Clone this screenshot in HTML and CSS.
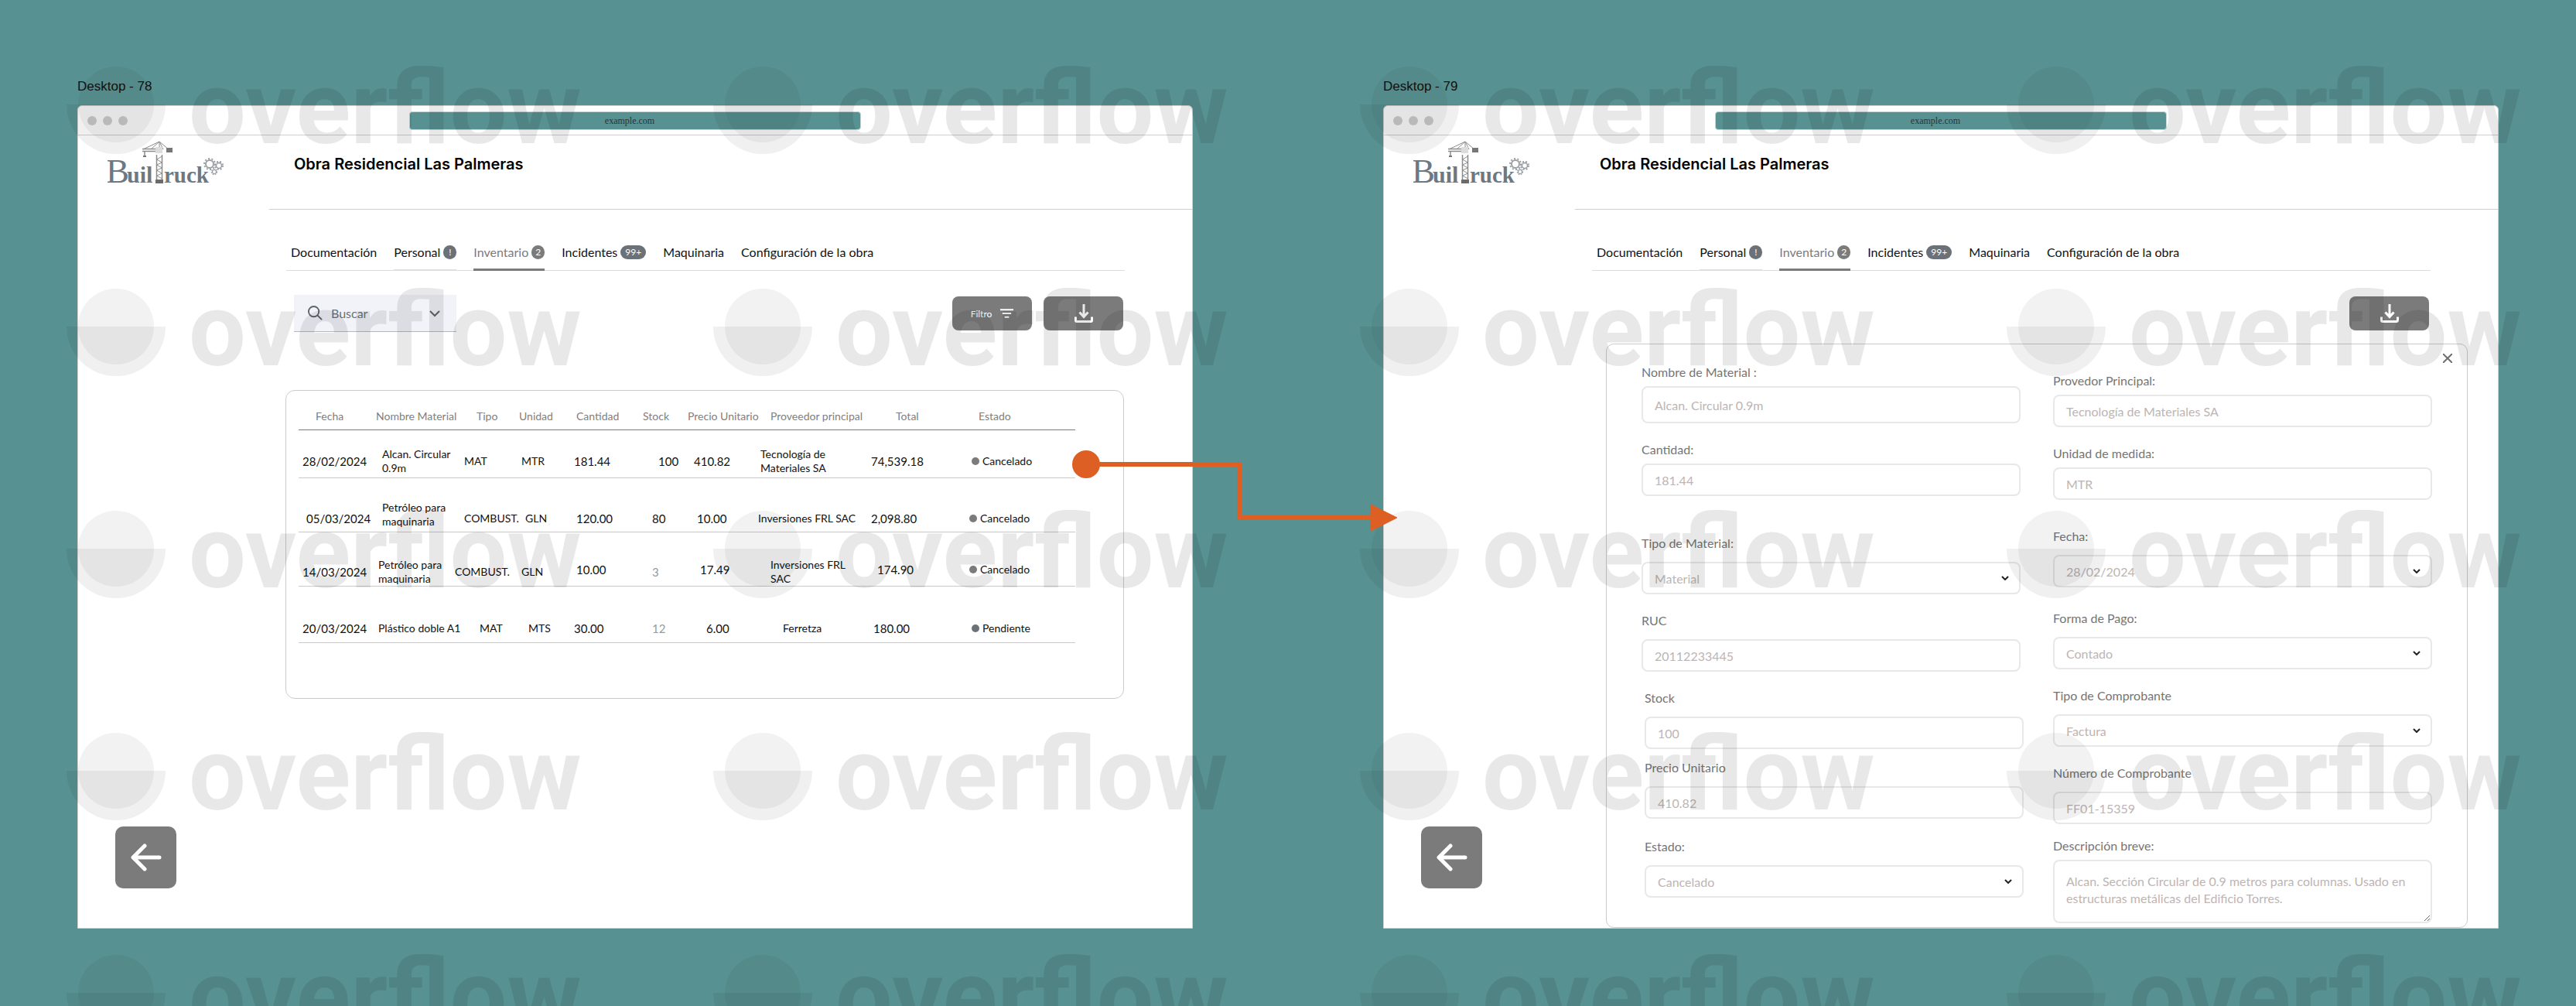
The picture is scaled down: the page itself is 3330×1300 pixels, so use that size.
FILE: index.html
```html
<!DOCTYPE html>
<html lang="es">
<head>
<meta charset="utf-8">
<meta name="viewport" content="width=device-width, initial-scale=1">
<title>Obra Residencial Las Palmeras</title>
<link rel="stylesheet" href="styles.css">
</head>
<body>
<svg class="defs" aria-hidden="true">
  <defs>
    <symbol id="logo" viewBox="0 0 150 56">
      <g class="logo-letters">
        <text x="-2" y="54" font-size="45">B</text>
        <text x="25" y="54" font-size="30" font-weight="700">uil</text>
        <text x="73" y="54" font-size="29" font-weight="700">ruck</text>
      </g>
      <g fill="none" stroke="#8c8c8c">
        <path d="M63.500 18V53M70.500 18V53" stroke-width="1.500"/>
        <path d="M63.500 24l7-4M63.500 24l7 4M63.500 31l7-3M63.500 31l7 4M63.500 38l7-3M63.500 38l7 4M63.500 45l7-3M63.500 45l7 4" stroke-width="1"/>
        <path d="M67 1L46 11M67 1L56 11M67 1V12M67 1l12 10M67 1l5 10" stroke-width="1"/>
        <path d="M45 10.500H62M45 13.500H62" stroke-width="1.500"/>
        <path d="M48 14v6" stroke-width="1.500"/>
      </g>
      <path d="M62 8h9v8h-9z" fill="#dcdcdc"/>
      <path d="M76 9h8v6h-8zM46 19h4v2h-4z" fill="#777"/>
      <path d="M62 50h10v5H62z" fill="#6b6b6b"/>
      <g fill="none" stroke="#9aa0a3">
        <circle cx="132" cy="30" r="5" stroke-width="2"/>
        <circle cx="132" cy="30" r="7" stroke-width="2" stroke-dasharray="2 2.400"/>
        <circle cx="144" cy="32" r="3.500" stroke-width="1.500"/>
        <circle cx="144" cy="32" r="5" stroke-width="2" stroke-dasharray="2 2"/>
        <circle cx="138" cy="40" r="2.500" stroke-width="1.200"/>
        <circle cx="138" cy="40" r="3.500" stroke-width="1.500" stroke-dasharray="1.500 1.500"/>
      </g>
    </symbol>
    <symbol id="i-download" viewBox="0 0 24 24">
      <path d="M12 0v16M6.500 10.500L12 16.500l5.500-6M1.500 16.500v4.500q0 1.500 1.500 1.500h18q1.500 0 1.500-1.500v-4.500" fill="none" stroke="currentColor" stroke-width="3"/>
    </symbol>
    <symbol id="i-back" viewBox="0 0 40 36">
      <path d="M37 18H4M18 3L3 18l15 15" fill="none" stroke="currentColor" stroke-width="5" stroke-linecap="round" stroke-linejoin="round"/>
    </symbol>
    <symbol id="i-down" viewBox="0 0 10 6">
      <path d="M1 1l4 4 4-4" fill="none" stroke="currentColor" stroke-width="2"/>
    </symbol>
  </defs>
</svg>

<main class="stage">
  <section class="frame">
    <h2 class="frame-label">Desktop - 78</h2>
    <div class="window">
      <div class="titlebar">
        <div class="dots"><span class="dot"></span><span class="dot"></span><span class="dot"></span></div>
        <div class="address">example.com</div>
      </div>
      <div class="app">
        <aside class="sidebar">
          <svg class="logo" role="img" aria-label="BuilTruck"><use href="#logo"/></svg>
          <button class="btn back" type="button" aria-label="Volver"><svg class="back-icon"><use href="#i-back"/></svg></button>
        </aside>
        <div class="content">
          <header class="header"><h1 class="title">Obra Residencial Las Palmeras</h1></header>
          <nav class="tabs">
            <a class="tab" href="#doc">Documentación</a>
            <a class="tab tab-alert" href="#per">Personal <span class="badge">!</span></a>
            <a class="tab tab-active" href="#inv">Inventario <span class="badge">2</span></a>
            <a class="tab" href="#inc">Incidentes <span class="badge badge-wide">99+</span></a>
            <a class="tab" href="#maq">Maquinaria</a>
            <a class="tab" href="#conf">Configuración de la obra</a>
          </nav>
          <div class="toolbar">
            <label class="search">
              <svg class="search-icon" viewBox="0 0 20 20" aria-hidden="true"><circle cx="8" cy="8" r="7" fill="none" stroke="currentColor" stroke-width="2"/><path d="M13 13l6 6" stroke="currentColor" stroke-width="2"/></svg>
              <input class="search-input" type="text" placeholder="Buscar" aria-label="Buscar">
              <svg class="search-chevron" viewBox="0 0 14 10" aria-hidden="true"><path d="M1 2l6 6 6-6" fill="none" stroke="currentColor" stroke-width="2"/></svg>
            </label>
            <div class="actions">
              <button class="btn action" type="button">Filtro
                <svg class="filter-icon" viewBox="0 0 18 12" aria-hidden="true"><path d="M0 1h18M3 6h12M6 11h6" stroke="currentColor" stroke-width="2"/></svg>
              </button>
              <button class="btn action" type="button" aria-label="Descargar"><svg class="download-icon"><use href="#i-download"/></svg></button>
            </div>
          </div>
          <div class="card">
            <table class="inventory">
              <colgroup><col class="c-date"><col class="c-name"><col class="c-type"><col class="c-unit"><col class="c-qty"><col class="c-stock"><col class="c-price"><col class="c-vendor"><col class="c-total"><col class="c-state"></colgroup>
              <thead>
                <tr><th class="in-5">Fecha</th><th>Nombre Material</th><th class="in-7">Tipo</th><th>Unidad</th><th class="in-1">Cantidad</th><th>Stock</th><th>Precio Unitario</th><th class="in-4">Proveedor principal</th><th class="in-8">Total</th><th class="in-3">Estado</th></tr>
              </thead>
              <tbody>
                <tr class="row-a"><td class="num in-1">28/02/2024</td><td class="in-2">Alcan. Circular<br>0.9m</td><td class="in-3">MAT</td><td class="in-1">MTR</td><td class="num">181.44</td><td class="num in-5">100</td><td class="num in-2">410.82</td><td class="in-1">Tecnología de<br>Materiales SA</td><td class="num">74,539.18</td><td class="in-1"><span class="state">Cancelado</span></td></tr>
                <tr class="row-b"><td class="num low in-2">05/03/2024</td><td class="in-2">Petróleo para<br>maquinaria</td><td class="low in-3">COMBUST.</td><td class="low in-2">GLN</td><td class="num low in-1">120.00</td><td class="num low in-3">80</td><td class="num low in-3">10.00</td><td class="low">Inversiones FRL SAC</td><td class="num low">2,098.80</td><td class="low"><span class="state">Cancelado</span></td></tr>
                <tr class="row-c"><td class="num in-1">14/03/2024</td><td class="in-1">Petróleo para<br>maquinaria</td><td>COMBUST.</td><td class="in-1">GLN</td><td class="num high in-1">10.00</td><td class="num faint in-3">3</td><td class="num high in-4">17.49</td><td class="in-4">Inversiones FRL<br>SAC</td><td class="num high in-2">174.90</td><td class="high"><span class="state">Cancelado</span></td></tr>
                <tr class="row-d"><td class="num in-1">20/03/2024</td><td class="in-1">Plástico doble A1</td><td class="in-8">MAT</td><td class="in-3">MTS</td><td class="num">30.00</td><td class="num faint in-3">12</td><td class="num in-6">6.00</td><td class="in-8">Ferretza</td><td class="num in-1">180.00</td><td class="in-1"><span class="state state-pending">Pendiente</span></td></tr>
              </tbody>
            </table>
          </div>
        </div>
      </div>
    </div>
  </section>

  <section class="frame">
    <h2 class="frame-label">Desktop - 79</h2>
    <div class="window">
      <div class="titlebar">
        <div class="dots"><span class="dot"></span><span class="dot"></span><span class="dot"></span></div>
        <div class="address">example.com</div>
      </div>
      <div class="app">
        <aside class="sidebar">
          <svg class="logo" role="img" aria-label="BuilTruck"><use href="#logo"/></svg>
          <button class="btn back" type="button" aria-label="Volver"><svg class="back-icon"><use href="#i-back"/></svg></button>
        </aside>
        <div class="content">
          <header class="header"><h1 class="title">Obra Residencial Las Palmeras</h1></header>
          <nav class="tabs">
            <a class="tab" href="#doc">Documentación</a>
            <a class="tab tab-alert" href="#per">Personal <span class="badge">!</span></a>
            <a class="tab tab-active" href="#inv">Inventario <span class="badge">2</span></a>
            <a class="tab" href="#inc">Incidentes <span class="badge badge-wide">99+</span></a>
            <a class="tab" href="#maq">Maquinaria</a>
            <a class="tab" href="#conf">Configuración de la obra</a>
          </nav>
          <div class="toolbar">
            <div class="actions">
              <button class="btn action" type="button" aria-label="Descargar"><svg class="download-icon"><use href="#i-download"/></svg></button>
            </div>
          </div>
          <form class="panel">
            <button class="close" type="button" aria-label="Cerrar"><svg class="close-icon" viewBox="0 0 12 12"><path d="M0 0l12 12M12 0L0 12" stroke="currentColor" stroke-width="2"/></svg></button>
            <div class="col">
              <div class="field"><label for="f-name">Nombre de Material :</label><input class="control tall" id="f-name" type="text" value="Alcan. Circular 0.9m"></div>
              <div class="field"><label for="f-qty">Cantidad:</label><input class="control" id="f-qty" type="text" value="181.44"></div>
              <div class="field roomy gap-2xl"><label for="f-type">Tipo de Material:</label><div class="select"><select class="control" id="f-type"><option>Material</option></select><svg class="chevron"><use href="#i-down"/></svg></div></div>
              <div class="field roomy"><label for="f-ruc">RUC</label><input class="control" id="f-ruc" type="text" value="20112233445"></div>
              <div class="inset">
                <div class="field roomy"><label for="f-stock">Stock</label><input class="control" id="f-stock" type="text" value="100"></div>
                <div class="field roomy gap-xs"><label for="f-price">Precio Unitario</label><input class="control" id="f-price" type="text" value="410.82"></div>
                <div class="field roomy gap-m"><label for="f-state">Estado:</label><div class="select"><select class="control" id="f-state"><option>Cancelado</option></select><svg class="chevron"><use href="#i-down"/></svg></div></div>
              </div>
            </div>
            <div class="col col-right">
              <div class="field"><label for="f-vendor">Provedor Principal:</label><input class="control" id="f-vendor" type="text" value="Tecnología de Materiales SA"></div>
              <div class="field"><label for="f-unit">Unidad de medida:</label><input class="control" id="f-unit" type="text" value="MTR"></div>
              <div class="field roomy gap-xl"><label for="f-date">Fecha:</label><div class="select"><select class="control" id="f-date"><option>28/02/2024</option></select><svg class="chevron"><use href="#i-down"/></svg></div></div>
              <div class="field roomy gap-l"><label for="f-pay">Forma de Pago:</label><div class="select"><select class="control" id="f-pay"><option>Contado</option></select><svg class="chevron"><use href="#i-down"/></svg></div></div>
              <div class="field roomy"><label for="f-doc">Tipo de Comprobante</label><div class="select"><select class="control" id="f-doc"><option>Factura</option></select><svg class="chevron"><use href="#i-down"/></svg></div></div>
              <div class="field roomy"><label for="f-num">Número de Comprobante</label><input class="control" id="f-num" type="text" value="FF01-15359"></div>
              <div class="field gap-s"><label for="f-desc">Descripción breve:</label><textarea class="control area" id="f-desc">Alcan. Sección Circular de 0.9 metros para columnas. Usado en estructuras metálicas del Edificio Torres.</textarea></div>
            </div>
          </form>
        </div>
      </div>
    </div>
  </section>

  <svg class="watermark" aria-hidden="true">
    <defs>
      <pattern id="mark" x="80" y="80" width="836" height="287" patternUnits="userSpaceOnUse">
        <circle cx="70" cy="55" r="49" fill-opacity=".05"/>
        <path d="M6 55H134A64 64 0 0 1 6 55z" fill-opacity=".06"/>
        <text class="mark-text" x="164" y="105">overflow</text>
      </pattern>
    </defs>
    <rect width="100%" height="100%" fill="url(#mark)"/>
  </svg>

  <svg class="connector" viewBox="0 0 420 110" aria-hidden="true">
    <path d="M18 18H216V87H390" fill="none" stroke="#de5f23" stroke-width="6"/>
    <circle cx="18" cy="18" r="18" fill="#de5f23"/>
    <path d="M385 69l36 18-36 18z" fill="#de5f23"/>
  </svg>
</main>
</body>
</html>
```
FILE: styles.css
```css
* {
  box-sizing: border-box;
}

body {
  margin: 0;
  background: #589191;
  color: #111;
  font-family: Lato, "Open Sans", sans-serif;
  font-size: 16px;
}

button,
input,
select,
textarea {
  font: inherit;
}

.defs {
  display: none;
}

.stage {
  position: relative;
  display: grid;
  grid-template-columns: 1fr 1fr;
  gap: 246px;
  min-height: 100vh;
  padding: 102px 100px 100px;
  overflow: hidden;
}

.frame {
  display: flex;
  flex-direction: column;
  gap: 14px;
  min-width: 0;
}

.frame-label {
  margin: 0;
  color: #111;
  font: 400 17px/20px "Liberation Sans", Arial, sans-serif;
}

.window {
  flex: 1;
  display: flex;
  flex-direction: column;
  background: #fff;
  border: 1px solid #d0d0d0;
  border-radius: 6px 6px 0 0;
}

/* Browser bar */
.titlebar {
  display: grid;
  grid-template-columns: 1fr 584px 1fr;
  align-items: center;
  height: 38px;
  padding: 0 12px;
  border-bottom: 1px solid #cfcfcf;
}

.dots {
  display: flex;
  gap: 8px;
}

.dot {
  width: 12px;
  height: 12px;
  border-radius: 50%;
  background: #cfcfcf;
}

.address {
  padding-right: 14px;
  background: #589191;
  border: 1px solid #c4d4d4;
  border-radius: 4px;
  color: #23343f;
  font: 400 12px/22px "Liberation Serif", "Times New Roman", serif;
  text-align: center;
}

/* App shell */
.app {
  flex: 1;
  display: grid;
  grid-template-columns: 247px minmax(0, 1fr);
}

.sidebar {
  display: flex;
  flex-direction: column;
  justify-content: space-between;
  align-items: flex-start;
  padding: 7px 0 51px 38px;
}

.logo {
  width: 150px;
  height: 56px;
}

.logo-letters {
  fill: #6d7880;
  font-family: "Liberation Serif", "Times New Roman", serif;
}

.btn {
  display: flex;
  align-items: center;
  justify-content: center;
  gap: 11px;
  padding: 0;
  background: #7b7b7b;
  border: 0;
  border-radius: 8px;
  color: #fff;
}

.back {
  width: 79px;
  height: 80px;
  margin-left: 10px;
  border-radius: 10px;
}

.back-icon {
  width: 40px;
  height: 36px;
}

.header {
  height: 96px;
  padding: 23px 0 0 32px;
  border-bottom: 1px solid #cfcfcf;
}

.title {
  margin: 0;
  color: #000;
  font: 600 20px/28px Inter, sans-serif;
}

/* Tabs */
.tabs {
  display: flex;
  gap: 22px;
  height: 44px;
  margin: 35px 87px 31px 22px;
  padding-left: 6px;
  border-bottom: 1px solid #dcdcdc;
}

.tab {
  display: flex;
  align-items: center;
  gap: 4px;
  height: 44px;
  padding-bottom: 5px;
  color: #111;
  text-decoration: none;
  white-space: nowrap;
}

.tab-alert {
  border-bottom: 2px solid #dedede;
  padding-bottom: 3px;
}

.tab-active {
  border-bottom: 3px solid #7b7b7b;
  padding-bottom: 2px;
  color: #7b7b7b;
}

.badge {
  min-width: 17px;
  height: 18px;
  padding: 0 5px;
  border-radius: 9px;
  background: #6a7179;
  color: #fff;
  font-size: 12px;
  line-height: 18px;
  text-align: center;
}

.badge-wide {
  min-width: 33px;
}

.tab-active .badge {
  background: #7b7b7b;
}

/* Toolbar */
.toolbar {
  display: flex;
  align-items: center;
  justify-content: space-between;
  height: 48px;
  margin: 0 89px 0 32px;
}

.search {
  display: flex;
  align-items: center;
  gap: 11px;
  width: 210px;
  height: 48px;
  padding: 0 21px 0 18px;
  background: #f2f3f8;
  border-bottom: 1px solid #b4b8be;
  color: #5c646c;
}

.search-icon {
  flex: none;
  width: 19px;
  height: 19px;
}

.search-input {
  flex: 1;
  min-width: 0;
  padding: 0;
  background: none;
  border: 0;
  color: #5c646c;
}

.search-input::placeholder {
  color: #6a7179;
  opacity: 1;
}

.search-chevron {
  flex: none;
  width: 14px;
  height: 10px;
}

.actions {
  display: flex;
  gap: 15px;
  margin-left: auto;
}

.action {
  width: 103px;
  height: 44px;
  font-size: 12px;
}

.filter-icon {
  width: 17px;
  height: 12px;
}

.download-icon {
  width: 24px;
  height: 24px;
}

/* Inventory table */
.card {
  min-height: 399px;
  margin: 75px 88px 0 21px;
  padding: 24px 62px 24px 16px;
  border: 1px solid #cbcbcb;
  border-radius: 12px;
}

.inventory {
  width: 100%;
  table-layout: fixed;
  border-collapse: separate;
  border-spacing: 0;
  font-size: 14px;
  line-height: 18px;
}

.c-date { width: 98px; }
.c-name { width: 102px; }
.c-type { width: 83px; }
.c-unit { width: 71px; }
.c-qty { width: 89px; }
.c-stock { width: 58px; }
.c-price { width: 91px; }
.c-vendor { width: 146px; }
.c-total { width: 127px; }
.c-state { width: 139px; }

.inventory th,
.inventory td {
  padding: 0 0 0 2px;
  border-bottom: 1px solid #c9c9c9;
  text-align: left;
  vertical-align: middle;
  white-space: nowrap;
}

.inventory th {
  height: 27px;
  padding-bottom: 8px;
  border-bottom-color: #7b7b7b;
  color: #808080;
  font-weight: 400;
}

.inventory .num { font-size: 15px; }
.inventory .faint { color: #9a9a9a; }

.inventory .in-1 { padding-left: 5px; }
.inventory .in-2 { padding-left: 10px; }
.inventory .in-3 { padding-left: 14px; }
.inventory .in-4 { padding-left: 18px; }
.inventory .in-5 { padding-left: 22px; }
.inventory .in-6 { padding-left: 26px; }
.inventory .in-7 { padding-left: 30px; }
.inventory .in-8 { padding-left: 34px; }

.row-a td { height: 62px; padding-top: 18px; }
.row-b td { height: 70px; padding-top: 24px; }
.row-c td { height: 70px; padding-top: 32px; }
.row-d td { height: 73px; padding-top: 35px; }

.row-b .low { padding-top: 34px; }
.row-c .high { padding-top: 26px; }

.state {
  display: flex;
  align-items: center;
  gap: 4px;
}

.state::before {
  content: "";
  width: 10px;
  height: 10px;
  border-radius: 50%;
  background: #7b7b7b;
}

.state-pending::before {
  background: #6a7179;
}

/* Detail form */
.panel {
  position: relative;
  display: grid;
  grid-template-columns: 1fr 1fr;
  gap: 42px;
  margin: 15px 39px 0 40px;
  padding: 26px 45px 5px;
  border: 1px solid #cbcbcb;
  border-radius: 10px;
}

.close {
  position: absolute;
  top: 12px;
  right: 19px;
  display: flex;
  padding: 0;
  background: none;
  border: 0;
  color: #6f6f6f;
}

.close-icon {
  width: 12px;
  height: 12px;
}

.col {
  min-width: 0;
}

.col-right {
  padding-top: 11px;
}

.field {
  display: flex;
  flex-direction: column;
  gap: 8px;
}

.field + .field,
.inset {
  margin-top: 24px;
}

.field.roomy { gap: 14px; }
.field.gap-xs { margin-top: 14px; }
.field.gap-s { margin-top: 18px; }
.field.gap-m { margin-top: 26px; }
.field.gap-l { margin-top: 30px; }
.field.gap-xl { margin-top: 37px; }
.field.gap-2xl { margin-top: 51px; }

.inset {
  margin-left: 4px;
  margin-right: -4px;
}

.field label {
  color: #757575;
  line-height: 20px;
}

.control {
  width: 100%;
  height: 42px;
  padding: 0 15px;
  background: transparent;
  border: 2px solid #e8e8e8;
  border-radius: 8px;
  color: #bdb4b4;
}

.tall {
  height: 48px;
}

.area {
  display: block;
  height: 82px;
  padding: 15px;
  line-height: 22px;
  resize: vertical;
}

.select {
  display: grid;
  align-items: center;
}

.select > * {
  grid-area: 1 / 1;
}

.select .control {
  appearance: none;
}

.chevron {
  justify-self: end;
  width: 10px;
  height: 6px;
  margin-right: 15px;
  color: #222;
  pointer-events: none;
}

/* Canvas overlays */
.watermark {
  position: absolute;
  inset: 0;
  width: 100%;
  height: 100%;
  pointer-events: none;
}

.mark-text {
  fill: #000;
  fill-opacity: .09;
  font: 700 131px Roboto, sans-serif;
}

.connector {
  position: absolute;
  top: 582px;
  left: calc(50% - 279px);
  width: 420px;
  height: 110px;
  pointer-events: none;
}
```
